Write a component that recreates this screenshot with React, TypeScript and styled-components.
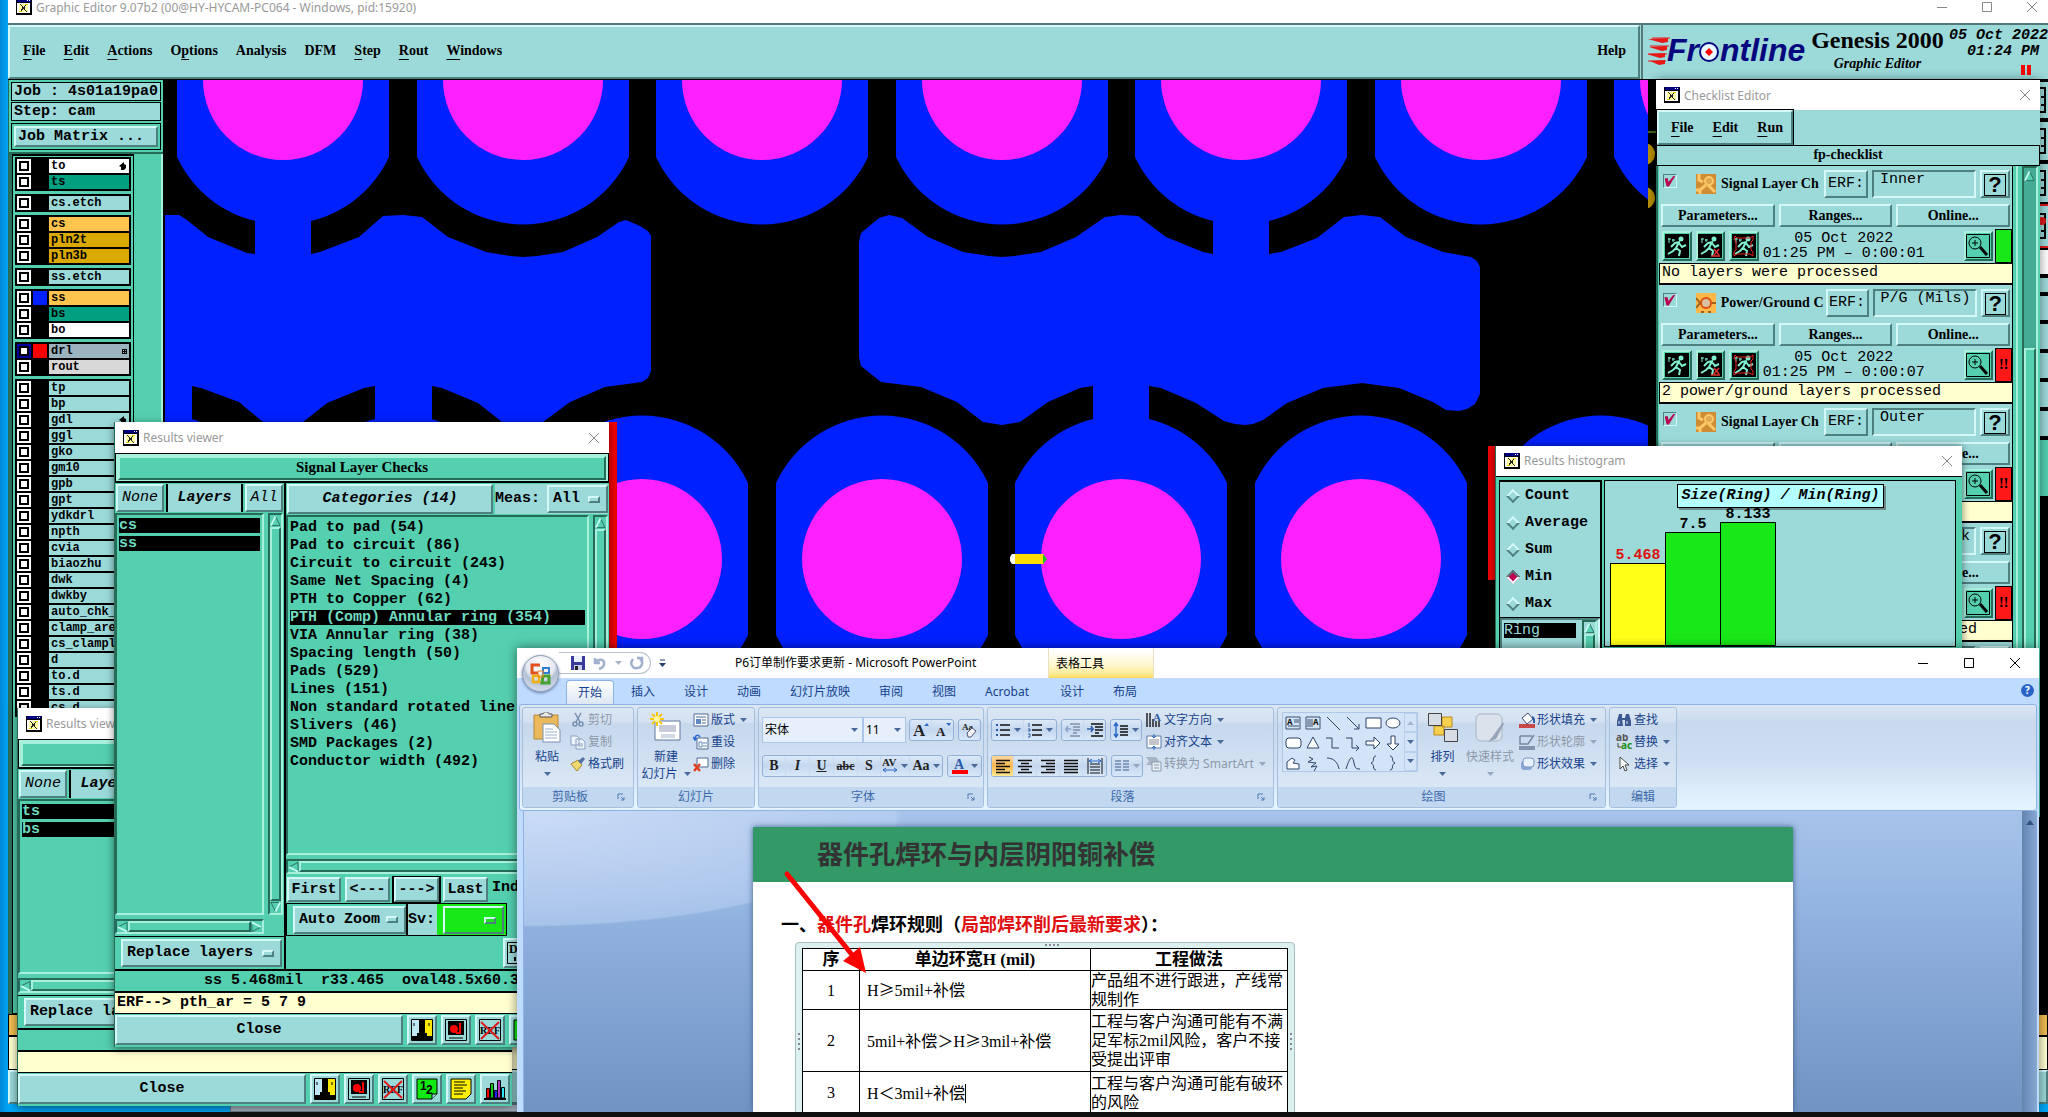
import React from 'react';
import styled, { createGlobalStyle, css } from 'styled-components';

const AQUA = '#9cdada';
const GREEN = '#54cfaf';
const CREAM = '#ffffd0';
const mono = `'Liberation Mono', monospace`;
const serif = `'Liberation Serif', serif`;
const ui = `'Noto Sans', 'Noto Sans CJK SC', sans-serif`;

const Global = createGlobalStyle`
  *, *::before, *::after { box-sizing: border-box; }
  html, body { margin: 0; height: 100%; overflow: hidden; }
  body { background: #00a2ee; color: #000; font-family: ${ui}; font-size: 12px; }
  button, input, select { margin: 0; padding: 0; font: inherit; color: inherit; border: 0; border-radius: 0; background: none; appearance: none; }
  h1, h2, h3, p { margin: 0; font-weight: inherit; font-size: inherit; }
  svg { display: block; flex: none; }
`;

const raised = (light = '#d2f8f8', dark = '#4e8080', w = 2) => css`
  border: ${w}px solid;
  border-color: ${light} ${dark} ${dark} ${light};
`;
const raisedAqua = raised();
const raisedGreen = raised('#a6f0dc', '#256b58');
const sunkenGreen = raised('#256b58', '#a6f0dc');
const sunkenAqua = raised('#4e8080', '#d2f8f8');

/* ---------- desktop and shared window parts ---------- */

const Desktop = styled.div`
  position: relative;
  height: 100vh;
  overflow: hidden;
  background: linear-gradient(90deg, #0086d8 0, #00a6f4 8px);
`;

const Taskbar = styled.div`
  position: absolute;
  left: 0; right: 0; bottom: 0;
  height: 5px;
  background: #101010;
`;

const BackWindow = styled.div`
  position: absolute;
  left: 230px; right: 40px; bottom: 5px;
  height: 8px;
  background: #a8b4c0;
  border: 1px solid #68788a;
`;

const TitleRow = styled.header<{ $h: number }>`
  flex: none;
  height: ${p => p.$h}px;
  display: flex;
  align-items: center;
  gap: 4px;
  padding: 0 9px 0 8px;
  background: #fff;
  color: #999;
  white-space: nowrap;
`;
const TitleText = styled.h2`flex: 1; min-width: 0; overflow: hidden;`;
const WinButton = styled.button`width: 12px; height: 12px; display: grid; place-items: center;`;

const XIcon = () => (
  <svg width="16" height="16" viewBox="0 0 16 16" shapeRendering="crispEdges">
    <rect x="0" y="0" width="16" height="16" fill="#000" />
    <rect x="1" y="4" width="13" height="10" fill="#fff" />
    <rect x="1" y="0" width="14" height="3" fill="#000080" />
    <path d="M11 1h1M13 1h1" stroke="#fff" />
    <path d="M3 5h9v8H3z" fill="#ffffa0" />
    <path d="M4 5l7 8M11 5l-7 8" stroke="#222" strokeWidth="1" />
    <path d="M9 5h3M3 12h3" stroke="#e8d000" />
  </svg>
);
const CloseIcon = ({ c = '#888' }) => (
  <svg width="12" height="12" viewBox="0 0 12 12"><path d="M1 1l10 10M11 1L1 11" stroke={c} fill="none" /></svg>
);
const MaxIcon = ({ c = '#888' }) => (
  <svg width="12" height="12" viewBox="0 0 12 12"><path d="M1.500 1.500h9v9h-9z" stroke={c} fill="none" /></svg>
);
const MinIcon = ({ c = '#888' }) => (
  <svg width="12" height="12" viewBox="0 0 12 12"><path d="M1 6.500h10" stroke={c} fill="none" /></svg>
);

/* ---------- main editor window ---------- */

const Main = styled.main`
  position: absolute;
  left: 8px; right: 0; top: 0; bottom: 13px;
  display: flex;
  flex-direction: column;
  background: ${GREEN};
`;
const MainTitle = styled(TitleRow)`
  align-items: flex-start;
  padding: 0 10px 0 8px;
`;
const MainTitleText = styled(TitleText)`line-height: 16px;`;
const WinButtons = styled.div`display: flex; gap: 33px; padding-top: 1px;`;
const IconClip = styled.span`height: 15px; overflow: hidden; display: flex; align-items: flex-end;`;

const TopBar = styled.div`
  flex: none;
  height: 57px;
  display: flex;
  gap: 1px;
  border-top: 2px solid #557878;
  border-bottom: 1px solid #000;
  background: ${AQUA};
`;
const MenuBar = styled.nav`
  flex: 1;
  display: flex;
  align-items: center;
  gap: 18px;
  padding: 0 12px 2px 13px;
  ${raisedAqua}
  font: bold 14px/18px ${serif};
`;
const MenuButton = styled.button`
  font: bold 14px/18px ${serif};
  &:last-child { margin-left: auto; }
  & > u { text-underline-offset: 4px; }
`;
const Brand = styled.div`
  flex: none;
  width: 407px;
  border-left: 2px solid #557878;
  display: flex;
  gap: 5px;
  padding-left: 5px;
`;
const Product = styled.div`
  width: 136px;
  text-align: center;
  padding-top: 1px;
  white-space: nowrap;
`;
const ProductName = styled.h1`font: bold 24px/28px ${serif};`;
const ProductSub = styled.p`font: italic bold 14px/20px ${serif};`;
const Clock = styled.div`
  font: italic bold 15px/16px ${mono};
  white-space: pre;
  text-align: right;
  padding-top: 3px;
  width: 99px;
  flex: none;
`;
const Pause = styled.span`
  display: block;
  width: 10px; height: 10px;
  margin: 5px 17px 0 auto;
  border: solid red;
  border-width: 0 4px;
`;

const Logo = () => (
  <svg width="158" height="50" viewBox="0 0 158 50">
    <path d="M0 14l20-1v4l-6 1zM1 22l18-1v4l-5 1zM-2 29l19-1v4l-5 1zM2 36l15-1v4l-6 1z" fill="#e81818" />
    <path d="M4 13h18M2 21h19M-2 29h21M0 36h18" stroke="#e81818" strokeWidth="1" />
    <g fill="#06067e" fontFamily="Liberation Sans, sans-serif" fontWeight="bold" fontStyle="italic" fontSize="32">
      <text x="19" y="36">Fr</text>
      <text x="72" y="36">ntline</text>
    </g>
    <circle cx="61" cy="27" r="9" fill="#e8f8ff" stroke="#06067e" strokeWidth="2" />
    <path d="M61 23l4 4-4 4-4-4z" fill="red" />
  </svg>
);

const Work = styled.div`flex: 1; min-height: 0; display: flex;`;
const Side = styled.aside`
  flex: none;
  width: 155px;
  display: flex;
  flex-direction: column;
  background: ${GREEN};
  border-left: 1px solid #256b58;
`;
const JobPanel = styled.div`
  padding: 2px;
  display: grid;
  gap: 1px;
  font: bold 15px/17px ${mono};
  border-bottom: 2px solid #256b58;
`;
const JobLine = styled.p`
  border: 1px solid #000;
  background: ${AQUA};
  height: 19px;
  padding-left: 2px;
  white-space: pre;
  overflow: hidden;
`;
const JobBox = styled.div`border: 1px solid #000; padding: 2px; margin-top: 1px;`;
const JobButton = styled.button`
  ${raisedAqua}
  background: ${AQUA};
  width: 100%;
  height: 21px;
  text-align: left;
  padding-left: 2px;
  font: bold 15px/15px ${mono};
`;
const LayerArea = styled.div`flex: 1; min-height: 0; display: flex; border-left: 3px solid #2e6e5c;`;
const LayerFrame = styled.div`
  width: 122px;
  overflow: hidden;
  border: 1px solid #000;
  border-top-width: 2px;
  padding: 1px 2px;
  display: flex;
  flex-direction: column;
  gap: 3px;
`;
const LayerTrough = styled.div`flex: 1; border-right: 2px solid #a6f0dc;`;
const LayerGroup = styled.div`
  flex: none;
  background: #000;
  padding: 2px;
  display: grid;
  gap: 2px;
`;
const LayerRow = styled.label`
  display: grid;
  grid-template-columns: 14px 14px 1fr;
  gap: 2px;
  height: 14px;
`;
const LayerBox = styled.input<{ $on?: boolean }>`
  && {
    width: 14px; height: 14px;
    background: #fff;
    border: 2px solid ${p => (p.$on ? '#0000a0' : '#fff')};
    box-shadow: inset 0 0 0 2px #000;
  }
`;
const Swatch = styled.span<{ $c?: string }>`background: ${p => p.$c || '#000'};`;
const LayerName = styled.span<{ $c: string }>`
  background: ${p => p.$c};
  font: bold 12px/13px ${mono};
  padding: 0 2px;
  display: flex;
  justify-content: space-between;
  align-items: center;
  overflow: hidden;
  white-space: nowrap;
`;
const Hand = () => (
  <svg width="8" height="8" viewBox="0 0 8 8"><path d="M0 4l5-4v2l2 1v3L5 8H2V5z" /></svg>
);
const Grid4 = () => (
  <svg width="5" height="5" viewBox="0 0 5 5" shapeRendering="crispEdges"><path d="M0 .5h5M0 2.500h5M0 4.500h5M.5 0v5M2.500 0v5M4.500 0v5" stroke="#000" /></svg>
);

const A = AQUA;
const layerGroups: { n: string; c: string; s?: string; on?: boolean; m?: 'hand' | 'grid' }[][] = [
  [{ n: 'to', c: '#fff', m: 'hand' }, { n: 'ts', c: '#00a080' }],
  [{ n: 'cs.etch', c: A }],
  [{ n: 'cs', c: '#fdc54d' }, { n: 'pln2t', c: '#d9a900' }, { n: 'pln3b', c: '#d9a900' }],
  [{ n: 'ss.etch', c: A }],
  [{ n: 'ss', c: '#fdc54d', s: '#0020ff' }, { n: 'bs', c: '#00a080' }, { n: 'bo', c: '#fff' }],
  [{ n: 'drl', c: '#9bb3be', s: '#f00', on: true, m: 'grid' }, { n: 'rout', c: '#d8d8d8' }],
  ['tp', 'bp', 'gdl', 'ggl', 'gko', 'gm10', 'gpb', 'gpt', 'ydkdrl', 'npth', 'cvia', 'biaozhu', 'dwk', 'dwkby', 'auto_chk_', 'clamp_are', 'cs_clampl', 'd', 'to.d', 'ts.d', 'cs.d']
    .map(n => ({ n, c: A, m: n === 'gdl' ? ('hand' as const) : undefined })),
];

const Canvas = styled.div`
  flex: 1;
  min-width: 0;
  background: #000;
  overflow: hidden;
`;

const topPads = [283, 523, 762, 1002, 1241, 1481, 1720];
const lowPads = [163, 403, 642, 882, 1121, 1361, 1601];

const Board = () => (
  <svg width="1493" height="1024">
    <defs>
      <clipPath id="view"><rect x="165" y="80" width="1483" height="1030" /></clipPath>
    </defs>
    <g transform="translate(-163 -80)">
      <path d="M1648 132h8" stroke="#406820" strokeWidth="2" />
      <circle cx="1644" cy="154" r="11" fill="#b89000" />
      <circle cx="1644" cy="198" r="11" fill="#b89000" />
      <rect x="1600" y="80" width="48" height="400" fill="#000" />
      <g clipPath="url(#view)" fill="#0020ff">
        {topPads.map(x => (
          <g key={x}>
            <path d={`M${x - 106} 60V157A117 117 0 0 0 ${x + 106} 157V60z`} />
            <circle cx={x} cy="80" r="80" fill="#ff20ff" />
          </g>
        ))}
        {lowPads.map(x => (
          <g key={x}>
            <path d={`M${x - 106} 483A117 117 0 0 1 ${x + 106} 483V635A117 117 0 0 1 ${x - 106} 635z`} />
            <circle cx={x} cy="559" r="80" fill="#ff20ff" />
          </g>
        ))}
        <path d="M165 215H179L187 220 208 237 247 253 255 254V215H311V254L320 252 359 237 383 216 403 215 422 217 448 237 486 252 510 256 523 257 537 256 563 252 597 237 619 222 626 220 640 226 648 231 651 236V371L648 378 642 382 605 387 570 402 543 422 530 425 514 425 502 422 478 403 442 388 432 386V422H375V386L364 388 327 403 303 422 290 425 275 425 263 422 239 402 201 388 192 386V422H165z" />
        <path d="M859 242L861 233 879 218 889 215 902 218 928 237 963 252 989 256 1002 257 1015 256 1041 252 1076 237 1105 217 1121 215 1138 216 1166 237 1203 252 1213 254V215H1269V254L1281 252 1317 238 1344 217 1362 215 1380 217 1406 237 1443 252 1471 257 1477 261 1480 267V394L1475 404 1467 409 1459 411 1446 410 1433 402 1399 388 1362 383 1323 388 1287 403 1263 420 1253 424 1245 425 1235 424 1224 421 1196 403 1161 388 1149 386V422H1093V386L1080 388 1048 402 1020 422 1002 425 983 422 957 402 921 387 881 382 861 366 859 357z" />
        <rect x="1014" y="554" width="30" height="10" fill="#ffdc00" />
        <path d="M1015 554h-3l-2 3v4l2 3h3z" fill="#fff" />
        <path d="M1043 554l4 5-4 5z" fill="#18c818" />
      </g>
    </g>
  </svg>
);

const RightTools = styled.div`
  flex: none;
  width: 392px;
  display: flex;
  flex-direction: column;
  background: #000;
`;
const ToolCell = styled.div<{ $h: number; $c?: string; $red?: boolean }>`
  flex: none;
  height: ${p => p.$h}px;
  border: solid ${p => (p.$red ? '#e01818' : '#000')};
  border-width: 2px 0;
  background: ${p => p.$c || AQUA};
  display: flex;
  align-items: center;
  justify-content: flex-end;
`;
const ToolGap = styled.div`flex: 1; background: #000;`;
const ToolGlyph = ({ red }: { red?: boolean }) => (
  <svg width="8" height="26" viewBox="0 0 8 26">
    <path d="M0 1h5v24H0M1 18h3M1 10h3" fill="none" stroke="#000" strokeWidth="2" />
    {red && <circle cx="2" cy="8" r="4" fill="#e01818" />}
  </svg>
);
const Foot = styled.footer`flex: none; height: 90px; display: grid; grid-template-rows: 22px 34px 34px;`;
const FootLine = styled.div<{ $c: string }>`
  background: ${p => p.$c};
  border: 1px solid #000;
  ${p => p.$c === AQUA && raisedAqua}
`;

const MenuItem = ({ t, u }: { t: string; u?: number }) => (
  <MenuButton type="button">
    {u === undefined ? t : <>{t.slice(0, u)}<u>{t[u]}</u>{t.slice(u + 1)}</>}
  </MenuButton>
);

const Editor = () => (
  <Main>
    <MainTitle $h={23}>
      <IconClip><XIcon /></IconClip>
      <MainTitleText>Graphic Editor 9.07b2 (00@HY-HYCAM-PC064 - Windows, pid:15920)</MainTitleText>
      <WinButtons>
        <WinButton aria-label="Minimize"><MinIcon /></WinButton>
        <WinButton aria-label="Maximize"><MaxIcon /></WinButton>
        <WinButton aria-label="Close"><CloseIcon /></WinButton>
      </WinButtons>
    </MainTitle>
    <TopBar>
      <MenuBar>
        <MenuItem t="File" u={0} /><MenuItem t="Edit" u={0} /><MenuItem t="Actions" u={0} />
        <MenuItem t="Options" u={1} /><MenuItem t="Analysis" /><MenuItem t="DFM" />
        <MenuItem t="Step" u={0} /><MenuItem t="Rout" u={0} /><MenuItem t="Windows" u={0} />
        <MenuItem t="Help" />
      </MenuBar>
      <Brand>
        <Logo />
        <Product><ProductName>Genesis 2000</ProductName><ProductSub>Graphic Editor</ProductSub></Product>
        <Clock>{'05 Oct 2022\n01:24 PM '}<Pause /></Clock>
      </Brand>
    </TopBar>
    <Work>
      <Side>
        <JobPanel>
          <JobLine>Job : 4s01a19pa0</JobLine>
          <JobLine>Step: cam</JobLine>
          <JobBox><JobButton type="button">Job Matrix ...</JobButton></JobBox>
        </JobPanel>
        <LayerArea>
          <LayerFrame>
            {layerGroups.map((g, i) => (
              <LayerGroup key={i}>
                {g.map(l => (
                  <LayerRow key={l.n}>
                    <LayerBox type="checkbox" $on={l.on} defaultChecked={l.on} />
                    <Swatch $c={l.s} />
                    <LayerName $c={l.c}>{l.n}{l.m === 'hand' && <Hand />}{l.m === 'grid' && <Grid4 />}</LayerName>
                  </LayerRow>
                ))}
              </LayerGroup>
            ))}
          </LayerFrame>
          <LayerTrough />
        </LayerArea>
      </Side>
      <Canvas><Board /></Canvas>
      <RightTools>
        <ToolCell $h={40}><ToolGlyph /></ToolCell>
        <ToolCell $h={42}><ToolGlyph /></ToolCell>
        <ToolCell $h={42}><ToolGlyph /></ToolCell>
        <ToolCell $h={44} $red><ToolGlyph red /></ToolCell>
        <ToolCell $h={28} $c="#fff" />
        <ToolCell $h={18} /><ToolCell $h={28} /><ToolCell $h={29} /><ToolCell $h={29} /><ToolCell $h={29} /><ToolCell $h={29} />
        <ToolCell $h={60} $c={GREEN} />
        <ToolGap />
      </RightTools>
    </Work>
    <Foot><FootLine $c="#f0bc50" /><FootLine $c={CREAM} /><FootLine $c={AQUA} /></Foot>
  </Main>
);

/* ---------- results viewer ---------- */

const Viewer = styled.section<{ $x: number; $y: number; $b: number }>`
  position: absolute;
  left: ${p => p.$x}px; top: ${p => p.$y}px; bottom: ${p => p.$b}px;
  width: 495px;
  display: flex;
  flex-direction: column;
  background: ${GREEN};
  border-left: 1px solid #256b58;
  box-shadow: 0 2px 8px rgba(0, 0, 0, .5);
  font: bold 15px/18px ${mono};
`;
const ViewTitle = styled(TitleRow)`font: 12px/16px ${ui};`;
const Heading = styled.h3`
  flex: none;
  height: 30px;
  border: solid #000;
  border-width: 1px 1px 2px 1px;
  background: #a6f0dc;
  padding: 2px;
  font: bold 15px/18px ${serif};
  text-align: center;
  & > span { display: block; ${raisedGreen} height: 24px; background: ${GREEN}; }
`;
const Split = styled.div`flex: 1; min-height: 0; display: grid; grid-template-columns: 171px 1fr;`;
const Col = styled.div<{ $line?: boolean }>`
  display: flex;
  flex-direction: column;
  min-width: 0;
  min-height: 0;
  border-right: ${p => (p.$line ? '2px solid #000' : '0')};
`;
const HeadRow = styled.div<{ $h: number }>`flex: none; display: flex; height: ${p => p.$h}px; padding: 1px; gap: 2px;`;
const AquaButton = styled.button<{ $w?: number; $i?: boolean; $thin?: boolean; $focus?: boolean }>`
  ${raisedAqua}
  ${p => p.$focus && css`outline: 2px solid #000;`}
  background: ${AQUA};
  flex: ${p => (p.$w ? 'none' : '1')};
  width: ${p => (p.$w ? p.$w + 'px' : 'auto')};
  font-style: ${p => (p.$i ? 'italic' : 'normal')};
  font-weight: ${p => (p.$thin ? 'normal' : 'bold')};
  white-space: nowrap;
`;
const LayersLabel = styled.span`
  flex: 1;
  background: ${AQUA};
  border: solid #000;
  border-width: 0 2px;
  text-align: center;
  font-style: italic;
  line-height: 28px;
`;
const MeasLabel = styled.label`
  flex: none;
  width: 113px;
  background: ${AQUA};
  display: flex;
  align-items: center;
  justify-content: space-between;
`;
const OptionBox = styled.span<{ $c?: string; $w?: number }>`
  ${raisedAqua}
  background: ${p => p.$c || AQUA};
  height: 28px;
  ${p => (p.$w ? css`width: ${p.$w}px;` : css`flex: 1;`)}
  display: flex;
  align-items: center;
  padding: 0 6px 0 4px;
  &::after { content: ''; width: 12px; height: 7px; ${raisedAqua} flex: none; }
`;
const OptionSelect = styled.select`flex: 1; min-width: 0; height: 22px;`;
const ListRow = styled.div`flex: 1; min-height: 0; display: flex; gap: 4px;`;
const List = styled.ul`
  ${sunkenGreen}
  flex: 1;
  min-width: 0;
  margin: 0;
  padding: 3px 2px 0 2px;
  list-style: none;
  overflow: hidden;
  white-space: nowrap;
`;
const Item = styled.li<{ $on?: boolean }>`
  height: 15px;
  line-height: 15px;
  margin-bottom: 3px;
  ${p => p.$on && css`background: #000; color: #6fdcc0;`}
`;
const Scroll = styled.div<{ $h?: boolean }>`
  ${sunkenGreen}
  flex: none;
  ${p => (p.$h ? css`height: 15px; margin: 4px 20px 2px 0;` : css`width: 15px; flex-direction: column; margin-right: 1px;`)}
  display: flex;
`;
const Thumb = styled.span`${raisedGreen} flex: 1; background: ${GREEN};`;
const Arrow = ({ d }: { d: 'u' | 'd' | 'l' | 'r' }) => {
  const r = { u: 0, r: 90, d: 180, l: 270 }[d];
  return (
    <svg width="11" height="12" viewBox="0 0 12 12">
      <g transform={`rotate(${r} 6 6)`}>
        <path d="M6 1L1 11h10z" fill={GREEN} stroke="#256b58" />
        <path d="M6 1L1 11" stroke="#c6fff0" strokeWidth="2" />
      </g>
    </svg>
  );
};
const VScroll = () => <Scroll><Arrow d="u" /><Thumb /><Arrow d="d" /></Scroll>;
const HScroll = () => <Scroll $h><Arrow d="l" /><Thumb /><Arrow d="r" /></Scroll>;
const ReplaceBox = styled.div`
  flex: none;
  height: 33px;
  border-top: 1px solid #000;
  padding: 2px 2px 2px 6px;
  display: flex;
`;
const NavRow = styled.div`flex: none; height: 27px; padding: 1px 0 1px 1px; display: flex; gap: 4px; align-items: stretch; line-height: 22px; white-space: nowrap; overflow: hidden;`;
const ZoomRow = styled.div`
  flex: none;
  height: 33px;
  width: 221px;
  border: 1px solid #000;
  padding-left: 6px;
  display: flex;
  align-items: center;
`;
const SvLabel = styled.label`
  height: 31px;
  display: flex;
  align-items: center;
  background: ${AQUA};
  border-left: 2px solid #000;
`;
const SvColour = styled.span`
  width: 69px; height: 31px;
  margin-left: 2px;
  background: #18e818;
  padding: 2px 2px 2px 6px;
  display: flex;
`;
const ExtraRow = styled.div`flex: none; height: 33px; padding: 2px 0 0 217px;`;
const Status = styled.p`
  flex: none;
  height: 24px;
  border: solid #000;
  border-width: 2px 0;
  padding-left: 89px;
  line-height: 20px;
  white-space: nowrap;
  overflow: hidden;
  display: flex;
  gap: 18px;
`;
const Erf = styled.p`flex: none; height: 21px; background: ${CREAM}; border-bottom: 1px solid #000; padding-left: 2px; line-height: 19px;`;
const CloseRow = styled.div`flex: none; height: 33px; display: flex; gap: 4px; padding: 1px 2px 2px 0;`;
const IconButton = styled.button`
  ${raisedAqua}
  background: ${AQUA};
  flex: none;
  width: 30px;
  height: 30px;
  display: grid;
  place-items: center;
`;

const ToolIcon = ({ k }: { k: number }) => (
  <svg width="22" height="22" viewBox="0 0 22 22">
    {k === 0 && <><path d="M0 0h11v22H0z" fill="#bfe8f4" /><path d="M11 0h11v22H11z" fill="#ffe800" /><path d="M8 1h6v13h2v3h5v5H1v-5h5v-3h2z" /><path d="M3 4v3M18 4v3" stroke="#000" /><path d="M.5.5h21v21H.5z" fill="none" stroke="#000" /></>}
    {k === 1 && <><path d="M.5.5h21v21H.5z" fill="#9cdada" stroke="#000" /><path d="M3 2h16v14H3z" /><circle cx="9" cy="10" r="4" fill="red" /><path d="M15 4v10h-4" stroke="red" strokeWidth="2" fill="none" /><path d="M4 19h14" stroke="#000" /></>}
    {k === 2 && <><path d="M.5.5h21v21H.5z" fill="#9cdada" stroke="#000" /><text x="1" y="15" fontSize="10" fontFamily="Liberation Serif">REF</text><path d="M2 3l18 17M20 3L2 20" stroke="#e01818" strokeWidth="2" /></>}
    {k === 3 && <><path d="M1 1h20v15l-5 5H1z" fill="#10e810" stroke="#000" /><path d="M16 21v-5h5" fill="#9cdada" stroke="#000" /><text x="4" y="12" fontSize="12" fontWeight="bold" fontFamily="Liberation Sans">1</text><text x="10" y="16" fontSize="12" fontWeight="bold" fontFamily="Liberation Sans">2</text></>}
    {k === 4 && <><path d="M1 1h20v15l-5 5H1z" fill="#fff000" stroke="#000" /><path d="M4 4h11M4 7h13M4 10h9M4 13h12M4 16h9" stroke="#000" /></>}
    {k === 5 && <><path d="M0 21h22" stroke="#000" strokeWidth="2" /><g stroke="#000"><path d="M2.500 10.500h3V20h-3z" fill="red" /><path d="M6.500 5.500h3V20h-3z" fill="#10c810" /><path d="M10.500 12.500h3V20h-3z" fill="#2020ff" /><path d="M13.500 2.500h3V20h-3z" fill="#b030c0" /><path d="M17.500 9.500h3V20h-3z" fill="#30e8f0" /></g></>}
    {k === 6 && <><path d="M.5.5h21v21H.5z" fill="none" stroke="#000" /><text x="2" y="11" fontSize="12" fontFamily="Liberation Serif">D</text><path d="M8 15v4" stroke="#000" strokeWidth="2" /></>}
  </svg>
);

const categories = ['Pad to pad (54)', 'Pad to circuit (86)', 'Circuit to circuit (243)', 'Same Net Spacing (4)', 'PTH to Copper (62)', 'PTH (Comp) Annular ring (354)', 'VIA Annular ring (38)', 'Spacing length (50)', 'Pads (529)', 'Lines (151)', 'Non standard rotated line', 'Slivers (46)', 'SMD Packages (2)', 'Conductor width (492)'];

const ResultsViewer = ({ x, y, b, layers, front }: { x: number; y: number; b: number; layers: string[]; front?: boolean }) => (
  <Viewer $x={x} $y={y} $b={b}>
    <ViewTitle $h={31}><XIcon /><TitleText>Results viewer</TitleText><WinButton aria-label="Close"><CloseIcon /></WinButton></ViewTitle>
    <Heading><span>{front ? 'Signal Layer Checks' : ''}</span></Heading>
    <Split>
      <Col $line>
        <HeadRow $h={30}>
          <AquaButton $w={48} $i $thin>None</AquaButton>
          <LayersLabel>Layers</LayersLabel>
          <AquaButton $w={38} $i $thin>All</AquaButton>
        </HeadRow>
        <ListRow>
          <List>{layers.map(l => <Item key={l} $on>{l}</Item>)}</List>
          <VScroll />
        </ListRow>
        <HScroll />
        <ReplaceBox><OptionBox><OptionSelect aria-label="Layer mode"><option>Replace layers</option></OptionSelect></OptionBox></ReplaceBox>
      </Col>
      {front && (
        <Col>
          <HeadRow $h={32}>
            <AquaButton $i>Categories (14)</AquaButton>
            <MeasLabel>Meas:<OptionBox $w={61}><OptionSelect><option>All</option></OptionSelect></OptionBox></MeasLabel>
          </HeadRow>
          <ListRow>
            <List>{categories.map((c, i) => <Item key={c} $on={i === 5}>{c}</Item>)}</List>
            <VScroll />
          </ListRow>
          <HScroll />
          <NavRow>
            <AquaButton $w={54}>First</AquaButton><AquaButton $w={45}>&lt;---</AquaButton>
            <AquaButton $w={45} $focus>---&gt;</AquaButton><AquaButton $w={45}>Last</AquaButton><span>Index:</span>
          </NavRow>
          <ZoomRow>
            <OptionBox><OptionSelect aria-label="Zoom mode"><option>Auto Zoom</option></OptionSelect></OptionBox>
            <SvLabel>Sv:<SvColour><OptionBox $c="#18e818"><OptionSelect><option></option></OptionSelect></OptionBox></SvColour></SvLabel>
          </ZoomRow>
          <ExtraRow><IconButton aria-label="Details"><ToolIcon k={6} /></IconButton></ExtraRow>
        </Col>
      )}
    </Split>
    <Status>{front && <><span>ss 5.468mil</span><span>r33.465</span><span>oval48.5x60.3</span></>}</Status>
    <Erf>{front ? 'ERF--> pth_ar = 5 7 9' : ''}</Erf>
    <CloseRow>
      <AquaButton>Close</AquaButton>
      {[0, 1, 2, 3, 4, 5].map(k => <IconButton key={k} aria-label={`Tool ${k + 1}`}><ToolIcon k={k} /></IconButton>)}
    </CloseRow>
  </Viewer>
);

const RedEdge = styled.div<{ $x: number; $y: number; $h: number }>`
  position: absolute;
  left: ${p => p.$x}px; top: ${p => p.$y}px;
  width: 8px; height: ${p => p.$h}px;
  background: #f00000;
`;

/* ---------- checklist editor ---------- */

const Checklist = styled.section`
  position: absolute;
  right: 8px; top: 80px; bottom: 300px;
  width: 384px;
  display: flex;
  flex-direction: column;
  background: ${GREEN};
  box-shadow: 0 0 10px rgba(0, 0, 0, .45);
`;
const CheckMenuRow = styled.div`flex: none; height: 35px; background: ${AQUA}; display: flex;`;
const CheckMenu = styled.nav`
  margin-left: 1px;
  width: 136px;
  outline: 1px solid #000;
  ${raisedAqua}
  display: flex;
  align-items: center;
  gap: 19px;
  padding-left: 12px;
  & > button:last-child { margin: 0; }
`;
const CheckName = styled.h3`
  flex: none;
  height: 21px;
  background: ${AQUA};
  border: 1px solid #000;
  font: bold 14px/18px ${serif};
  text-align: center;
`;
const CheckBody = styled.div`
  flex: 1;
  min-height: 0;
  display: flex;
  gap: 4px;
  border-left: 2px solid #256b58;
  padding-left: 1px;
`;
const CheckItems = styled.div`
  flex: 1;
  min-width: 0;
  overflow: hidden;
  border-right: 2px solid #a6f0dc;
  padding-right: 3px;
`;
const CheckScroll = styled.div`
  ${sunkenGreen}
  flex: none;
  width: 16px;
  margin-right: 2px;
  background: #44ab94;
  display: flex;
  flex-direction: column;
  padding-top: 2px;
`;
const CheckThumb = styled(Thumb)`margin-top: 166px;`;
const Entry = styled.article`
  height: 119px;
  background: ${AQUA};
  border-right: 1px solid #000;
  padding-top: 4px;
  display: flex;
  flex-direction: column;
`;
const EntryTop = styled.div`height: 28px; display: flex; align-items: stretch; padding: 0 2px 0 4px;`;
const Tick = styled.input`
  && {
    ${raised('#4e8080', '#d2f8f8', 1)}
    width: 14px; height: 14px;
    margin: 4px 19px 0 0;
    display: grid;
    place-items: center;
  }
  &:checked::before {
    content: '';
    width: 11px; height: 11px;
    background: #b8004c;
    clip-path: polygon(0 25%, 30% 25%, 36% 60%, 85% 0, 100% 0, 40% 100%, 20% 100%);
  }
`;
const EntryIcon = styled.span`margin: 4px 5px 0 0;`;
const EntryName = styled.span`
  flex: 1;
  white-space: nowrap;
  font: bold 14px/28px ${serif};
`;
const ErfButton = styled.button`${raisedAqua} width: 44px; margin: 0 4px 0 2px; font: 15px/20px ${mono};`;
const ErfInput = styled.input`
  && {
    ${sunkenAqua}
    width: 104px;
    padding: 0 0 8px 6px;
    font: 15px/18px ${mono};
    margin-right: 4px;
  }
`;
const Help = styled.button`
  ${raisedAqua}
  width: 30px;
  padding: 2px;
  & > span { display: block; border: 1px solid #000; font: bold 22px/20px 'Liberation Sans', sans-serif; height: 22px; }
`;
const EntryButtons = styled.div`
  margin-top: 6px;
  height: 23px;
  padding: 0 2px;
  display: grid;
  grid-template-columns: repeat(3, 1fr);
  gap: 4px;
`;
const EntryButton = styled.button`${raisedAqua} font: bold 14px/18px ${serif};`;
const EntryRun = styled.div`margin-top: 2px; height: 34px; display: flex; align-items: center; gap: 4px; padding-left: 3px;`;
const RunButton = styled.button`
  ${raisedGreen}
  background: ${GREEN};
  width: 30px; height: 30px;
  display: grid;
  place-items: center;
`;
const RunTime = styled.p`flex: 1; padding-right: 38px; display: grid; justify-items: center; font: 15px/15px ${mono}; white-space: nowrap; width: 198px; margin-right: -1px;`;
const Flag = styled.span<{ $c: string }>`
  width: 17px; height: 34px;
  margin-left: -2px;
  background: ${p => p.$c};
  border: 1px solid #000;
  font: bold 15px/30px ${serif};
  text-align: center;
`;
const Message = styled.p`
  height: 22px;
  border: solid #000;
  border-width: 1px 0 2px 1px;
  background: ${CREAM};
  font: 15px/18px ${mono};
  padding-left: 2px;
  white-space: nowrap;
`;
const Runner = ({ v }: { v: number }) => (
  <svg width="24" height="24" viewBox="0 0 24 24">
    <rect width="24" height="24" />
    <circle cx="16" cy="5" r="2.500" fill="#7ff0d0" />
    <path d="M15 8l-5 1-4 4M14 8l-3 6 4 3-1 5M11 14l-3 3-5 3M14 9l3 4 4-2" stroke="#7ff0d0" strokeWidth="2" fill="none" />
    <path d="M3 5h3M7 6h3M3 8h2M4 4v3M8 5v3" stroke="#7ff0d0" />
    {v === 1 && <path d="M16 21l5-6M16 15l5 6M13 22h9" stroke="#e03030" strokeWidth="1.500" />}
    {v === 2 && <path d="M3 2l2 2h13l3-2v4l-2 2v8l2 2v4l-3-2H5l-3 2v-4l2-2V8L2 5z" fill="none" stroke="#e82020" strokeWidth="1" />}
  </svg>
);
const SearchIcon = () => (
  <svg width="24" height="24" viewBox="0 0 24 24">
    <path d="M.5.5h23v23H.5z" fill={GREEN} stroke="#000" />
    <circle cx="9" cy="9" r="6" fill="none" stroke="#000" /><path d="M6 9h6M9 6v6" stroke="#000" />
    <path d="M14 13l7 8" stroke="#000" strokeWidth="3" />
  </svg>
);
const SignalIcon = () => (
  <svg width="20" height="20" viewBox="0 0 20 20"><rect width="20" height="20" fill="#d08c34" /><circle cx="13" cy="7" r="5" fill="#fdc868" /><path d="M10 11L4 16H0M3 0v6l4 2M12 11l7 7M4 16v4" stroke="#fdc868" strokeWidth="3" fill="none" /><circle cx="13" cy="7" r="3" fill="#e0a850" /></svg>
);
const PowerIcon = () => (
  <svg width="20" height="20" viewBox="0 0 20 20"><rect width="20" height="20" fill="#fdb848" /><circle cx="10" cy="10" r="6" fill="#e05010" /><circle cx="10" cy="10" r="4" fill="#d8c0a0" /><path d="M0 5l4 5-4 5M20 10h-4M5 19h3M12 19h3" stroke="#a06020" strokeWidth="2" fill="none" /></svg>
);
const entries = [
  { n: 'Signal Layer Ch', e: 'Inner', t: '01', m: 'No layers were processed', ok: true },
  { n: 'Power/Ground C', e: 'P/G (Mils)', t: '07', m: '2 power/ground layers processed', p: true },
  { n: 'Signal Layer Ch', e: 'Outer', t: '07', m: '' },
  { n: 'Solder Mask', e: 'Soldermask', t: '07', m: '2 solder mask layers were processed' },
  { n: '', e: '', t: '07', m: '' },
];
const ChecklistEditor = () => (
  <Checklist>
    <TitleRow $h={30}><XIcon /><TitleText>Checklist Editor</TitleText><WinButton aria-label="Close"><CloseIcon /></WinButton></TitleRow>
    <CheckMenuRow><CheckMenu><MenuItem t="File" u={0} /><MenuItem t="Edit" u={0} /><MenuItem t="Run" u={0} /></CheckMenu></CheckMenuRow>
    <CheckName>fp-checklist</CheckName>
    <CheckBody>
      <CheckItems>
        {entries.map((e, i) => (
          <Entry key={i}>
            <EntryTop>
              <Tick type="checkbox" defaultChecked aria-label={e.n} />
              <EntryIcon>{e.p ? <PowerIcon /> : <SignalIcon />}</EntryIcon>
              <EntryName>{e.n}</EntryName>
              <ErfButton>ERF:</ErfButton>
              <ErfInput defaultValue={e.e} aria-label="ERF" />
              <Help><span>?</span></Help>
            </EntryTop>
            <EntryButtons><EntryButton>Parameters...</EntryButton><EntryButton>Ranges...</EntryButton><EntryButton>Online...</EntryButton></EntryButtons>
            <EntryRun>
              {[0, 1, 2].map(v => <RunButton key={v} aria-label={`Run ${v + 1}`}><Runner v={v} /></RunButton>)}
              <RunTime><span>05 Oct 2022</span><span>01:25 PM – 0:00:{e.t}</span></RunTime>
              <RunButton aria-label="Zoom"><SearchIcon /></RunButton>
              <Flag $c={e.ok ? '#18e818' : '#ff1818'}>{e.ok ? '' : '!!'}</Flag>
            </EntryRun>
            <Message>{e.m}</Message>
          </Entry>
        ))}
      </CheckItems>
      <CheckScroll><Arrow d="u" /><CheckThumb /></CheckScroll>
    </CheckBody>
  </Checklist>
);

/* ---------- histogram ---------- */

const Histogram = styled.section`
  position: absolute;
  right: 86px; top: 446px;
  width: 467px; height: 260px;
  display: flex;
  flex-direction: column;
  background: ${GREEN};
  border-left: 1px solid #256b58;
  box-shadow: 0 0 8px rgba(0, 0, 0, .5);
  font: bold 15px/18px ${mono};
`;
const HistTitle = styled(ViewTitle)`border-bottom: 0;`;
const HistBody = styled.div`flex: 1; min-height: 0; display: flex; gap: 2px; padding: 3px 6px 0 3px; border-top: 1px solid #000;`;
const HistSide = styled.div`width: 103px; border: solid #000; border-width: 2px 2px 0 1px; background: ${AQUA}; display: flex; flex-direction: column;`;
const Radios = styled.div`height: 136px; border-bottom: 1px solid #000; padding-left: 6px;`;
const RadioLabel = styled.label`height: 27px; display: flex; align-items: center; gap: 5px;`;
const Radio = styled.input`
  && {
    width: 10px; height: 10px;
    margin: 2px;
    transform: rotate(45deg);
    border: 2px solid;
    border-color: #d2f8f8 #4e8080 #4e8080 #d2f8f8;
  }
  &&:checked { background: #c00050; border-color: #557878 #fff #fff #557878; }
`;
const RingRow = styled.div`flex: 1; display: flex; gap: 6px; ${sunkenAqua}`;
const RingItem = styled.span`flex: 1; margin: 3px 0 0 2px; height: 15px; line-height: 15px; background: #000; color: ${AQUA}; font-weight: normal;`;
const Chart = styled.div`
  flex: 1;
  border: 1px solid #000;
  background: ${AQUA};
  height: 167px;
  padding: 3px 4px 0 5px;
  display: flex;
  flex-direction: column;
`;
const ChartTitle = styled.h3`
  align-self: center;
  border: 1px solid #000;
  background: #b4ffff;
  box-shadow: 2px 2px 0 #6c8c8c;
  font: italic bold 15px/20px ${mono};
  padding: 1px 3px;
  margin-bottom: -3px;
`;
const Bars = styled.div`flex: 1; display: flex; align-items: flex-end;`;
const BarCell = styled.div<{ $c: string }>`width: 56px; margin-right: -1px; text-align: center; line-height: 15px; color: ${p => (p.$c === '#ffff18' ? '#e01010' : '#000')};`;
const Bar = styled.div<{ $c: string }>`border: 1px solid #000; background: ${p => p.$c};`;
const bars = [{ v: '5.468', h: 83, c: '#ffff18' }, { v: '7.5', h: 114, c: '#18e818' }, { v: '8.133', h: 124, c: '#18e818' }];

const ResultsHistogram = () => (
  <Histogram>
    <HistTitle $h={30}><XIcon /><TitleText>Results histogram</TitleText><WinButton aria-label="Close"><CloseIcon /></WinButton></HistTitle>
    <HistBody>
      <HistSide>
        <Radios>
          {['Count', 'Average', 'Sum', 'Min', 'Max'].map(r => (
            <RadioLabel key={r}><Radio type="radio" name="stat" defaultChecked={r === 'Min'} />{r}</RadioLabel>
          ))}
        </Radios>
        <RingRow><RingItem>Ring</RingItem><VScroll /></RingRow>
      </HistSide>
      <Chart>
        <ChartTitle>Size(Ring) / Min(Ring)</ChartTitle>
        <Bars>{bars.map(b => <BarCell key={b.v} $c={b.c}>{b.v}<Bar $c={b.c} style={{ height: b.h }} /></BarCell>)}</Bars>
      </Chart>
    </HistBody>
  </Histogram>
);

/* ---------- PowerPoint ---------- */

const Ppt = styled.section`
  position: absolute;
  left: 517px; right: 9px; top: 648px; bottom: 5px;
  display: flex;
  flex-direction: column;
  background: #bfdbff;
  box-shadow: 0 0 10px rgba(0, 0, 0, .5);
  color: #15428b;
  font: 12px/16px ${ui};
`;
const PptTitle = styled.header`
  flex: none;
  height: 30px;
  background: #fff;
  color: #000;
  display: flex;
  align-items: center;
  padding-left: 42px;
`;
const Orb = styled.button`
  position: absolute;
  left: 5px; top: 7px;
  && {
    width: 37px; height: 37px;
    border-radius: 50%;
    border: 1px solid #8c9cb4;
    background: radial-gradient(circle at 50% 25%, #fff 0, #e4e8f0 45%, #b4c0d4 55%, #e8eef8 100%);
    display: grid;
    place-items: center;
    box-shadow: 0 1px 3px #6078a0;
  }
`;
const Quick = styled.div`
  width: 92px; height: 22px;
  border: 1px solid #b8c0cc;
  border-left: 0;
  border-radius: 0 11px 11px 0;
  display: flex;
  align-items: center;
  gap: 8px;
  padding-left: 12px;
`;
const QuickMore = styled.button`margin-left: 8px;`;
const DocTitle = styled.h2`width: 250px; margin-left: 69px; white-space: nowrap;`;
const ContextTitle = styled.div`
  margin-left: 63px;
  width: 106px; height: 30px;
  padding: 8px 7px 0;
  border: solid #e8e0c0;
  border-width: 0 1px;
  background: linear-gradient(#fff 10%, #fff6c8 60%, #ffe98c 90%, #f8d850);
`;
const PptWin = styled.div`margin-left: auto; display: flex; gap: 34px; padding-right: 18px;`;
const Tabs = styled.nav`flex: none; height: 26px; display: flex; align-items: flex-end; gap: 5px; padding: 0 5px 0 49px;`;
const Tab = styled.button<{ $on?: boolean; $gap?: boolean }>`
  height: 24px;
  && { padding: 0 12px; }
  line-height: 22px;
  margin-left: ${p => (p.$gap ? '2px' : '0')};
  ${p => p.$on && css`
    && { border: 1px solid #8db2e3; border-bottom: 0; border-radius: 4px 4px 0 0; padding: 0 11px; background: linear-gradient(#fff, #dce7f5); }
  `}
`;
const HelpDot = styled.button`
  margin: 0 0 7px auto;
  && { width: 13px; height: 13px; border-radius: 50%; background: #2a62c8; color: #fff; font: bold 10px/13px ${ui}; }
`;
const Ribbon = styled.div`
  flex: none;
  height: 107px;
  margin: 0 2px;
  padding: 2px 0 2px 2px;
  border: 1px solid #8db2e3;
  border-radius: 3px;
  background: linear-gradient(#dce7f5 0, #c8d9ee 18px, #d0e0f2 60px, #e4f4ff 100px);
  display: flex;
  gap: 3px;
`;
const Group = styled.div<{ $w: number }>`
  flex: none;
  width: ${p => p.$w}px;
  height: 101px;
  border: 1px solid #a4c0dc;
  border-radius: 3px;
  background: linear-gradient(#dce6f3 0, #d4e1f2 14px, #c7d8ed 16px, #dae7f5 80px);
  display: flex;
  flex-direction: column;
  overflow: hidden;
`;
const GroupBody = styled.div`flex: 1; display: flex; padding: 0 3px;`;
const GroupName = styled.div<{ $corner?: boolean }>`
  flex: none;
  height: 20px;
  background: #c1d8f0;
  color: #3e6aaa;
  display: grid;
  grid-template-columns: 1fr ${p => (p.$corner ? '16px' : '')};
  text-align: center;
  line-height: 18px;
  align-items: center;
`;
const Big = styled.button<{ $w: number; $off?: boolean }>`
  width: ${p => p.$w}px;
  display: flex;
  flex-direction: column;
  align-items: center;
  line-height: 17px;
  white-space: nowrap;
  color: ${p => (p.$off ? '#8d98a8' : 'inherit')};
  && { padding-top: 4px; }
`;
const BigArt = styled.span`height: 36px;`;
const Line = styled.span`display: flex; align-items: center; gap: 6px; min-height: 17px;`;
const Smalls = styled.div`display: flex; flex-direction: column; padding-top: 1px;`;
const Small = styled.button<{ $off?: boolean }>`
  height: 22px;
  display: flex;
  align-items: center;
  gap: 2px;
  white-space: nowrap;
  color: ${p => (p.$off ? '#8d98a8' : 'inherit')};
  & > svg:last-child:not(:first-child) { margin-left: 3px; }
`;
const Rows = styled.div`display: flex; flex-direction: column; gap: 14px; padding: 11px 0 0;`;
const CtlRow = styled.div`display: flex; gap: 4px; height: 22px; align-items: center;`;
const FontRow = styled(CtlRow)`gap: 0;`;
const FontSelectWrap = styled.label<{ $w: number }>`
  width: ${p => p.$w}px; height: 26px;
  border: 1px solid #abc6e8;
  background: #e6effa;
  color: #000;
  display: flex;
  align-items: center;
  padding: 0 4px 0 2px;
  & > select { flex: 1; min-width: 0; height: 22px; font-size: 12px; }
`;
const Strip = styled.div`
  display: flex;
  height: 22px;
  border: 1px solid #92b0d8;
  border-radius: 3px;
  background: linear-gradient(#dbe8f8, #c4d7ef 50%, #d8e8fa);
`;
const Cell = styled.button<{ $w: number; $on?: boolean; $f?: string }>`
  width: ${p => p.$w}px;
  display: flex;
  align-items: center;
  justify-content: center;
  gap: 3px;
  color: #222;
  && { font: ${p => p.$f || `bold 14px/18px ${serif}`}; border-right: 1px solid #c8daf0; }
  &&:last-child { border-right: 0; }
  ${p => p.$on && css`&& { background: linear-gradient(#fdd8a0, #fdb850 50%, #ffe890); }`}
`;
const Spacer = styled.span<{ $w: number }>`flex: none; width: ${p => p.$w}px;`;
const Gallery = styled.div`
  width: 136px; height: 60px;
  margin: 4px 0 0 1px;
  border: 1px solid #b0c8e8;
  background: #d4e4f8;
  display: flex;
`;
const Shapes = styled.div`display: grid; grid-template-columns: repeat(6, 20px); grid-auto-rows: 20px; width: 121px;`;
const ShapeBtns = styled.div`width: 13px; display: grid; grid-template-rows: repeat(3, 1fr); & > button { display: grid; place-items: center; border: 1px solid #b8d0ec; }`;

const Caret = ({ c = '#4a6a9c' }) => <svg width="7" height="4" viewBox="0 0 7 4"><path d="M0 0h7L3.500 4z" fill={c} /></svg>;
const Corner = () => <svg width="8" height="8" viewBox="0 0 8 8"><path d="M1 6V1h5M4 4l3 3M7 4v3H4" stroke="#5078b0" fill="none" /></svg>;
const Ico = ({ children, w = 16, h = 16 }: { children: React.ReactNode; w?: number; h?: number }) => (
  <svg width={w} height={h} viewBox={`0 0 ${w} ${h}`} fill="none">{children}</svg>
);

const GroupOf = ({ w, name, corner, children }: { w: number; name: string; corner?: boolean; children: React.ReactNode }) => (
  <Group $w={w}><GroupBody>{children}</GroupBody><GroupName $corner={corner}><span>{name}</span>{corner && <Corner />}</GroupName></Group>
);

const lines = (xs: [number, number][]) => <Ico>{xs.map(([a, b], i) => <path key={i} d={`M${a} ${2.5 + i * 3}H${b}`} stroke="#111" strokeWidth="1.500" />)}</Ico>;

const shapes = [
  <><path d="M3 4h14v12H3z" stroke="#38506c" /><text x="4" y="12" fontSize="8" fontWeight="bold" fill="#111" stroke="none">A</text><path d="M11 7h5M11 9h5M5 13h11" stroke="#38506c" /></>,
  <><path d="M3 4h14v12H3z" stroke="#38506c" /><path d="M5 6v8M7 6v8M9 6v8" stroke="#38506c" /><text x="10" y="12" fontSize="8" fontWeight="bold" fill="#111" stroke="none">A</text></>,
  <path d="M4 4l13 13" />, <path d="M4 4l12 12M16 11v5h-5" />, <path d="M3 5h15v10H3z" fill="#fff" />, <ellipse cx="10" cy="10" rx="7" ry="5" fill="#fff" />,
  <rect x="3" y="5" width="15" height="10" rx="3" fill="#fff" />, <path d="M10 4l6 11H4z" fill="#fff" />, <path d="M3 5h6v10h7" />, <path d="M3 5h6v10h7M13 12l3 3-3 3" />,
  <path d="M3 8h8V4l6 6-6 6v-4H3z" fill="#fff" />, <path d="M8 3v8H4l6 6 6-6h-4V3z" fill="#fff" />,
  <path d="M4 16V9l5-4 3 2-2 3 6 1v5z" fill="#fff" />, <path d="M6 4l4 2-5 3 8 1-5 4 6-1-3 5" />, <path d="M4 5c7 0 11 5 12 11" />, <path d="M3 16C8 0 10 4 11 10s3 6 6 6" />,
  <path d="M13 3c-4 0-1 6-5 7 4 1 1 7 5 7" />, <path d="M7 3c4 0 1 6 5 7-4 1-1 7-5 7" />,
];

const Body = styled.div`
  flex: 1;
  min-height: 0;
  margin: 0 2px 0 6px;
  border-left: 1px solid #8db2e3;
  display: flex;
  background:
    radial-gradient(ellipse 620px 190px at 0 0, rgba(214, 228, 250, .75) 0, rgba(190, 212, 244, .5) 60%, rgba(180, 204, 240, 0) 61%),
    linear-gradient(#a6c3ea 0, #8fb0de 40%, #7093c4 100%);
`;
const Slide = styled.article`
  flex: 1;
  margin: 16px 229px 0 229px;
  background: #fff;
  color: #000;
  box-shadow: 0 0 6px #40608c;
  position: relative;
  overflow: hidden;
`;
const SlideHead = styled.h3`
  height: 55px;
  background: #339966;
  color: #333;
  font: bold 26px/52px 'Noto Sans CJK SC', sans-serif;
  padding-left: 64px;
`;
const Rule = styled.p`
  margin: 28px 0 0 28px;
  font: bold 18px/26px 'Noto Sans CJK SC', sans-serif;
  white-space: nowrap;
  & > em { color: #e01010; font-style: normal; }
`;
const TableFrame = styled.div`
  position: relative;
  margin: 6px 0 0 42px;
  width: 500px;
  height: 180px;
  padding: 5px 6px;
  border: 1px solid #a8c0c0;
  border-radius: 4px;
  background: #dcf0f0;
`;
const Grip = styled.i<{ $side: 'top' | 'left' | 'right' }>`
  position: absolute;
  ${p => p.$side === 'top' && css`top: 1px; left: 50%; width: 14px; height: 2px; background: repeating-linear-gradient(90deg, #889 0 2px, transparent 2px 4px);`}
  ${p => p.$side !== 'top' && css`${p.$side}: 2px; top: 90px; width: 2px; height: 18px; background: repeating-linear-gradient(#889 0 2px, transparent 2px 5px);`}
`;
const Table = styled.table`
  width: 486px;
  border-collapse: collapse;
  background: #fff;
  table-layout: fixed;
  font: 16px/19px 'Liberation Serif', 'Noto Sans CJK SC', serif;
  & th, & td { border: 1px solid #000; padding: 0; font-weight: normal; }
  & th { font: bold 17px/20px 'Liberation Serif', 'Noto Sans CJK SC', serif; height: 22px; }
  & tbody td:first-child { text-align: center; }
  & tbody td:nth-child(2) { padding-left: 7px; }
  & col:nth-child(1) { width: 57px; }
  & col:nth-child(2) { width: 231px; }
`;
const Tr = styled.tr<{ $h: number }>`height: ${p => p.$h}px;`;
const Sym = styled.span`font-family: 'Noto Sans CJK SC', sans-serif;`;
const TextCaret = styled.span`border-right: 1px solid #000; padding: 1px 0;`;
const Pointer = styled.svg`position: absolute; left: 28px; top: 43px;`;
const PptScroll = styled.div`
  flex: none;
  width: 15px;
  background: linear-gradient(90deg, #6484b0, #88a8d4);
  display: flex;
  justify-content: center;
  padding-top: 9px;
`;

const PowerPoint = () => (
  <Ppt>
    <PptTitle>
      <Quick>
        <Ico w={14} h={14}><path d="M0 0h14v14H0z" fill="#3a3a9c" /><path d="M3 0h8v6H3z" fill="#e8f0ff" /><path d="M3 9h8v5H3z" fill="#c8d0e8" /><path d="M4 10h3v4H4z" fill="#222" /></Ico>
        <Ico w={14} h={14}><path d="M2 2v5h5M2 7c3-5 10-4 9 1 0 2-2 4-5 5" stroke="#9fb0cc" strokeWidth="2.500" /></Ico>
        <Caret c="#a8b4c8" />
        <Ico w={14} h={14}><path d="M3 3c-4 5 0 10 4 9 5 0 7-6 3-9M7 2h5v5" stroke="#9fb0cc" strokeWidth="2.500" /></Ico>
      </Quick>
      <QuickMore aria-label="More"><Ico w={7} h={8}><path d="M1 1h5" stroke="#223c6c" /><path d="M0 4h7L3.500 8z" fill="#223c6c" /></Ico></QuickMore>
      <DocTitle>P6订单制作要求更新 - Microsoft PowerPoint</DocTitle>
      <ContextTitle>表格工具</ContextTitle>
      <PptWin>
        <WinButton aria-label="Minimize"><MinIcon c="#000" /></WinButton>
        <WinButton aria-label="Maximize"><MaxIcon c="#000" /></WinButton>
        <WinButton aria-label="Close"><CloseIcon c="#000" /></WinButton>
      </PptWin>
    </PptTitle>
    <Orb aria-label="Office">
      <Ico w={24} h={24}>
        <path d="M11 3H3v8h6" stroke="#e0501c" strokeWidth="3" /><path d="M14 6h6v5h-6z" stroke="#2f7fd0" strokeWidth="2" />
        <path d="M4 14h6v6H4z" stroke="#f0b010" strokeWidth="2.500" /><path d="M14 14h6v7h-7z" stroke="#48a030" strokeWidth="3" /><path d="M9 9h5v6H9z" stroke="#f08020" />
      </Ico>
    </Orb>
    <Tabs>
      <Tab $on>开始</Tab><Tab>插入</Tab><Tab>设计</Tab><Tab>动画</Tab><Tab>幻灯片放映</Tab><Tab>审阅</Tab><Tab>视图</Tab><Tab>Acrobat</Tab>
      <Tab $gap>设计</Tab><Tab>布局</Tab>
      <HelpDot>?</HelpDot>
    </Tabs>
    <Ribbon>
      <GroupOf w={112} name="剪贴板" corner>
        <Big $w={42}>
          <BigArt><Ico w={28} h={32}><path d="M1 3h24v24H1z" fill="#ecb85c" stroke="#b88838" /><path d="M7 5V2h3c1-3 5-3 6 0h3v3z" fill="#e8e8e8" stroke="#555" /><path d="M10 12h11l6 6v12H10z" fill="#fff" stroke="#7890b0" /><path d="M12 17h8M12 20h12M12 23h12M12 26h12" stroke="#9ab0cc" /></Ico></BigArt>
          <Line>粘贴</Line><Line><Caret /></Line>
        </Big>
        <Spacer $w={2} />
        <Smalls>
          <Small $off><Ico><path d="M5 1l5 9M11 1L6 10" stroke="#7890b0" strokeWidth="1.500" /><circle cx="5" cy="12" r="2" stroke="#7890b0" strokeWidth="1.500" /><circle cx="11" cy="12" r="2" stroke="#7890b0" strokeWidth="1.500" /></Ico>剪切</Small>
          <Small $off><Ico><path d="M1 2h6l2 2v7H1zM6 5h6l3 3v7H6z" fill="#eef4fc" stroke="#8ca0c0" /><path d="M8 10h5M8 12h5" stroke="#8ca0c0" /></Ico>复制</Small>
          <Small><Ico><path d="M1 8l7-4 4 5-5 6z" fill="#f0d870" stroke="#a88830" /><path d="M8 5l5-4 2 2-4 5z" fill="#5870a8" /></Ico>格式刷</Small>
        </Smalls>
      </GroupOf>
      <GroupOf w={118} name="幻灯片">
        <Big $w={50}>
          <BigArt><Ico w={32} h={32}><path d="M5 9h25v19H5z" fill="#fff" stroke="#6078a0" /><path d="M9 13h17v7H9z" fill="#c8ccd8" /><path d="M11 23h14M11 25h14" stroke="#a8b4c8" /><path d="M7 0v14M0 7h14M2 2l10 10M12 2L2 12" stroke="#f8c810" strokeWidth="2" /><circle cx="7" cy="7" r="3" fill="#fff8a0" /></Ico></BigArt>
          <Line>新建</Line><Line>幻灯片<Caret /></Line>
        </Big>
        <Spacer $w={2} />
        <Smalls>
          <Small><Ico><path d="M1 2h14v12H1z" fill="#fff" stroke="#506890" /><path d="M3 5h10" stroke="#506890" /><path d="M3 7h5v5H3z" fill="#6088c0" /><path d="M9 8h4M9 11h4" stroke="#506890" /></Ico>版式<Caret /></Small>
          <Small><Ico><path d="M4 4h11v11H4z" fill="#fff" stroke="#506890" /><path d="M6 8h3v5H6zM10 9h4M10 12h4" stroke="#6088c0" /><path d="M7 3C5 0 2 1 2 5M0 3l2 3 2-2" stroke="#2868d0" strokeWidth="1.500" /></Ico>重设</Small>
          <Small><Ico><path d="M4 2h11v9H4z" fill="#fff" stroke="#506890" /><path d="M1 8l6 7M7 8l-6 7" stroke="#e04020" strokeWidth="2.500" /></Ico>删除</Small>
        </Smalls>
      </GroupOf>
      <GroupOf w={226} name="字体" corner>
        <Rows>
          <FontRow>
            <FontSelectWrap $w={101}><select aria-label="Font"><option>宋体</option></select><Caret /></FontSelectWrap>
            <FontSelectWrap $w={43}><select aria-label="Size"><option>11</option></select><Caret /></FontSelectWrap>
            <Spacer $w={3} />
            <Strip>
              <Cell $w={22}><Ico><text x="0" y="14" fontSize="17" fontWeight="bold" fill="#222" fontFamily="Liberation Serif">A</text><path d="M11 4l3-3 2 3z" fill="#2c68c8" /></Ico></Cell>
              <Cell $w={21}><Ico><text x="1" y="14" fontSize="13" fontWeight="bold" fill="#222" fontFamily="Liberation Serif">A</text><path d="M11 1l3 3 2-3z" fill="#2c68c8" /></Ico></Cell>
            </Strip>
            <Spacer $w={4} />
            <Strip><Cell $w={21}><Ico><text x="0" y="8" fontSize="9" fill="#222">Aa</text><path d="M5 11l5-5 4 3-5 6H6z" fill="#f4f4fc" stroke="#505870" /></Ico></Cell></Strip>
          </FontRow>
          <CtlRow>
            <Strip>
              <Cell $w={23}>B</Cell><Cell $w={24} $f={`italic bold 14px/18px ${serif}`}>I</Cell><Cell $w={24}><u>U</u></Cell><Cell $w={24} $f={`bold 12px/18px ${serif}`}><s>abc</s></Cell><Cell $w={23}>S</Cell>
              <Cell $w={29}><Ico><text x="0" y="8" fontSize="11" fontWeight="bold" fill="#222" fontFamily="Liberation Serif">AV</text><path d="M1 12h14M4 10l-3 2 3 2M12 10l3 2-3 2" stroke="#2c68c8" /></Ico><Caret /></Cell><Cell $w={32}>Aa<Caret /></Cell>
            </Strip>
            <Strip><Cell $w={33}><Ico><text x="2" y="11" fontSize="14" fontWeight="bold" fill="#2c5ca8" fontFamily="Liberation Serif">A</text><path d="M0 12h16v4H0z" fill="red" /></Ico><Caret /></Cell></Strip>
          </CtlRow>
        </Rows>
      </GroupOf>
      <GroupOf w={287} name="段落" corner>
        <Rows>
          <CtlRow>
            <Strip>
              <Cell $w={32}><Ico><path d="M1 3h2M1 8h2M1 13h2" stroke="#2c5ca8" strokeWidth="2" /><path d="M5 3h10M5 8h10M5 13h10" stroke="#111" strokeWidth="1.500" /></Ico><Caret /></Cell>
              <Cell $w={32}><Ico><path d="M2 1v4M1 7h2v2H1M1 12h2v3H1" stroke="#2c5ca8" /><path d="M5 3h10M5 8h10M5 13h10" stroke="#111" strokeWidth="1.500" /></Ico><Caret /></Cell>
            </Strip>
            <Strip>
              <Cell $w={22}><Ico><path d="M5 2h10M8 5h7M8 8h7M8 11h4M5 14h10" stroke="#8090a8" strokeWidth="1.500" /><path d="M6 7H1l2-3M1 7l2 3" stroke="#8ca4cc" strokeWidth="1.500" /></Ico></Cell>
              <Cell $w={21}><Ico><path d="M4 2h12M8 5h8M8 8h8M8 11h4M4 14h12" stroke="#111" strokeWidth="1.500" /><path d="M0 7h6L4 4M6 7l-2 3" stroke="#2c5ca8" strokeWidth="1.500" /></Ico></Cell>
            </Strip>
            <Strip><Cell $w={30}><Ico><path d="M3 1v14M1 4l2-3 2 3M1 12l2 3 2-3" stroke="#2c68c8" strokeWidth="1.500" /><path d="M7 4h8M7 7h8M7 10h8M7 13h8" stroke="#111" strokeWidth="1.500" /></Ico><Caret /></Cell></Strip>
          </CtlRow>
          <CtlRow>
            <Strip>
              <Cell $w={22} $on>{lines([[1, 15], [1, 10], [1, 15], [1, 10], [1, 15]])}</Cell>
              <Cell $w={23}>{lines([[1, 15], [4, 12], [1, 15], [4, 12], [1, 15]])}</Cell>
              <Cell $w={23}>{lines([[1, 15], [6, 15], [1, 15], [6, 15], [1, 15]])}</Cell>
              <Cell $w={23}>{lines([[1, 15], [1, 15], [1, 15], [1, 15], [1, 15]])}</Cell>
              <Cell $w={23}><Ico><path d="M1 0v16M15 0v16M3 6h10M3 9h10M3 12h10M3 15h10" stroke="#111" /><path d="M2 3h12M5 1L2 3l3 2M11 1l3 2-3 2" stroke="#2c68c8" /></Ico></Cell>
            </Strip>
            <Strip><Cell $w={30}><Ico><path d="M1 3h6M1 6h6M1 9h6M1 12h6M9 3h6M9 6h6M9 9h6M9 12h6" stroke="#7088b0" strokeWidth="1.500" /></Ico><Caret c="#98a8c0" /></Cell></Strip>
          </CtlRow>
        </Rows>
        <Spacer $w={3} />
        <Smalls>
          <Small><Ico><path d="M1 1v14M4 1v14M7 7v8M10 9v6M13 9v6" stroke="#222" strokeWidth="1.500" /><text x="7" y="9" fontSize="11" fontWeight="bold" fill="#2c5ca8" fontFamily="Liberation Serif">A</text></Ico>文字方向<Caret /></Small>
          <Small><Ico><path d="M1 2h14v12H1z" fill="#fff" stroke="#5878a8" /><path d="M3 6h10M3 8h10M3 10h10" stroke="#889" /><path d="M8 0v4M6 2l2 2 2-2M8 16v-4M6 14l2-2 2 2" stroke="#2c68c8" /></Ico>对齐文本<Caret /></Small>
          <Small $off><Ico><path d="M0 1h10l3 4-3 4H0l3-4z" fill="#a8b4c4" /><path d="M6 6h9v9H6z" fill="#e8eef4" stroke="#8898ac" /><path d="M8 9h5M8 12h5" stroke="#8898ac" /></Ico>转换为 SmartArt<Caret c="#98a8c0" /></Small>
        </Smalls>
      </GroupOf>
      <GroupOf w={329} name="绘图" corner>
        <Gallery>
          <Shapes>{shapes.map((s, i) => <Ico key={i} w={20} h={20}><g stroke="#2c4468">{s}</g></Ico>)}</Shapes>
          <ShapeBtns>
            <button aria-label="Up"><svg width="7" height="4"><path d="M0 4h7L3.500 0z" fill="#a8b4c4" /></svg></button>
            <button aria-label="Down"><Caret /></button><button aria-label="More shapes"><Caret /></button>
          </ShapeBtns>
        </Gallery>
        <Spacer $w={2} />
        <Big $w={45}>
          <BigArt><Ico w={30} h={32}><path d="M14 5h10v10H14zM6 14h10v9H6z" fill="#f8d050" stroke="#b88c20" /><path d="M.5 1.500h13v12H.5zM16.500 17.500h13v12h-13z" fill="#d8dce4" stroke="#444" /></Ico></BigArt>
          <Line>排列</Line><Line><Caret /></Line>
        </Big>
        <Big $w={50} $off>
          <BigArt><Ico w={30} h={32}><rect x="1" y="2" width="26" height="27" rx="5" fill="#dbe2ec" stroke="#a8b4c4" /><path d="M28 10L18 24l-5 6 8-3 8-15z" fill="#98a4b8" /></Ico></BigArt>
          <Line>快速样式</Line><Line><Caret c="#98a8c0" /></Line>
        </Big>
        <Spacer $w={4} />
        <Smalls>
          <Small><Ico><path d="M3 6l6-5 5 6-6 5z" fill="#fff" stroke="#405070" /><path d="M13 5c3 1 2 4 2 6" stroke="#2c5ca8" strokeWidth="2" /><path d="M0 12h16v4H0z" fill="#c84848" /></Ico>形状填充<Caret /></Small>
          <Small $off><Ico><path d="M1 2h12M1 2v8h8l6-9" stroke="#7888a0" strokeWidth="1.500" /><path d="M0 12h16v4H0z" fill="#8494b0" /></Ico>形状轮廓<Caret c="#98a8c0" /></Small>
          <Small><Ico><rect x="2" y="5" width="11" height="9" rx="3" fill="#8ca8d8" /><rect x="4" y="2" width="11" height="9" rx="3" fill="#e8f0fc" stroke="#7890c0" /></Ico>形状效果<Caret /></Small>
        </Smalls>
      </GroupOf>
      <GroupOf w={68} name="编辑">
        <Spacer $w={3} />
        <Smalls>
          <Small><Ico><path d="M3 2h3v4l1 8H1V9zM10 2h3l2 7v5H9V6z" fill="#3c5890" /><path d="M6 7h4" stroke="#3c5890" strokeWidth="2" /><path d="M3 9v3M11 9v3" stroke="#dce8f8" /></Ico>查找</Small>
          <Small><Ico><text x="0" y="7" fontSize="10" fontWeight="bold" fill="#555">ab</text><text x="5" y="15" fontSize="10" fontWeight="bold" fill="#189018">ac</text><path d="M2 9v4h3" stroke="#444" /></Ico>替换<Caret /></Small>
          <Small><Ico><path d="M4 1v12l3-3 2 5 2-1-2-5h4z" fill="#fff" stroke="#444" /></Ico>选择<Caret /></Small>
        </Smalls>
      </GroupOf>
    </Ribbon>
    <Body>
      <Slide>
        <SlideHead>器件孔焊环与内层阴阳铜补偿</SlideHead>
        <Rule>一、<em>器件孔</em>焊环规则（<em>局部焊环削后最新要求</em>）：</Rule>
        <TableFrame>
          <Table>
            <colgroup><col /><col /><col /></colgroup>
            <thead><tr><th>序</th><th>单边环宽H (mil)</th><th>工程做法</th></tr></thead>
            <tbody>
              <Tr $h={39}><td>1</td><td>H<Sym>≥</Sym>5mil+补偿</td><td>产品组不进行跟进，产线常规制作</td></Tr>
              <Tr $h={62}><td>2</td><td>5mil+补偿<Sym>＞</Sym>H<Sym>≥</Sym>3mil+补偿</td><td>工程与客户沟通可能有不满足军标2mil风险，客户不接受提出评审</td></Tr>
              <Tr $h={42}><td>3</td><td>H<Sym>＜</Sym>3mil+<TextCaret>补偿</TextCaret></td><td>工程与客户沟通可能有破环的风险</td></Tr>
            </tbody>
          </Table>
          <Grip $side="top" /><Grip $side="left" /><Grip $side="right" />
        </TableFrame>
        <Pointer width="90" height="106"><path d="M6 4L72 86" stroke="red" strokeWidth="5" strokeLinecap="round" /><path d="M62 91l17-14 6 26z" fill="red" /></Pointer>
      </Slide>
      <PptScroll><svg width="8" height="5"><path d="M0 5h8L4 0z" fill="#34507c" /></svg></PptScroll>
    </Body>
  </Ppt>
);

export default function App() {
  return (
    <Desktop>
      <Global />
      <BackWindow />
      <Editor />
      <ChecklistEditor />
      <RedEdge $x={1488} $y={446} $h={134} />
      <ResultsHistogram />
      <RedEdge $x={609} $y={422} $h={228} />
      <ResultsViewer x={17} y={708} b={11} layers={['ts', 'bs']} />
      <ResultsViewer x={114} y={422} b={70} layers={['cs', 'ss']} front />
      <PowerPoint />
      <Taskbar />
    </Desktop>
  );
}
